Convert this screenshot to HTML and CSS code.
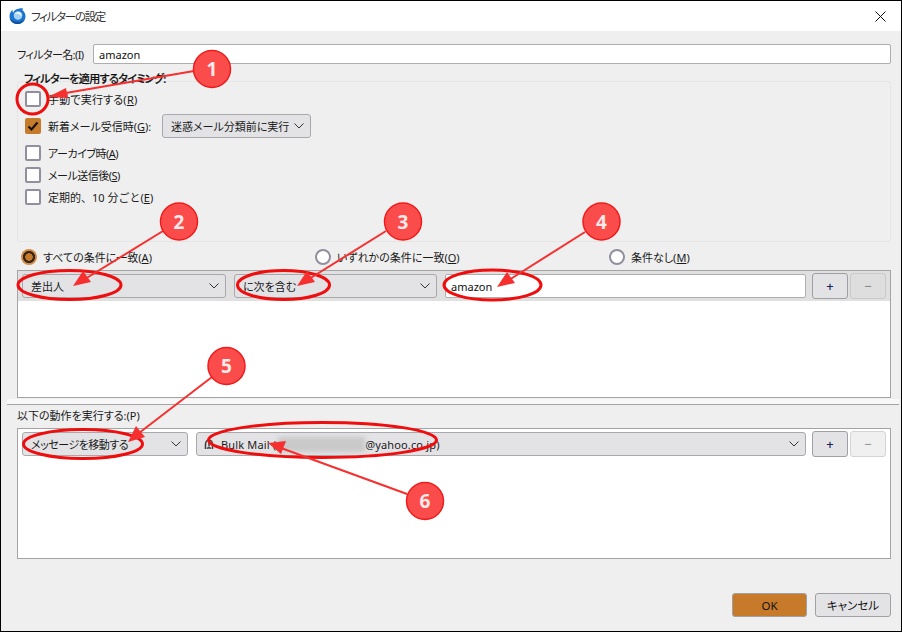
FILE: index.html
```html
<!DOCTYPE html>
<html lang="ja">
<head>
<meta charset="utf-8">
<title>フィルターの設定</title>
<link rel="stylesheet" href="styles.css">
</head>
<body>
<div class="window">
  <header class="titlebar">
    <svg class="logo" viewBox="0 0 17 17" width="17" height="17"><path d="M8.500 1C10 .6 12.500 0 14 .5c-.5.6-.6 1.200-.4 1.800 1.800 1.400 2.900 3.600 2.900 6 0 4.300-3.600 7.700-8 7.700s-8-3.400-8-7.700C.5 5 2 3 4 1.800 3.500 3 3.600 4 4 5c1-2.300 2.500-3.500 4.500-4z" fill="#1b74cf"/><path d="M.8 10.500c1 3.500 4 5.500 7.700 5.500 3.500 0 6.500-2.200 7.600-5.300-1.800 2.300-4.500 3.500-7.400 3.300C5.800 13.800 3 12.800.8 10.500z" fill="#0d4f9e"/><circle cx="9" cy="7.500" r="4.300" fill="#a8d2f2"/><path d="M5.600 6.500c.8-2.400 4-3.500 6-1.800 1 1 1.300 2.300.8 3.500-1-2-4-3.200-6.800-1.700z" fill="#eef7fe"/></svg>
    <span class="title">フィルターの設定</span>
    <svg class="close" viewBox="0 0 11 11" width="11" height="11"><path d="M.5.500l10 10M10.500.500l-10 10" stroke="#111" stroke-width="1" fill="none"/></svg>
  </header>

  <main class="content">
    <div class="name-row">
      <label class="name-label">フィルター名:(I)</label>
      <div class="text-input name-input">amazon</div>
    </div>

    <section class="timing">
      <div class="legend">フィルターを適用するタイミング:</div>
      <div class="check-row first"><span class="check"></span><span class="manual">手動で実行する(<u>R</u>)</span></div>
      <div class="check-row second">
        <span class="check checked"><svg viewBox="0 0 16 16" width="16" height="16"><path d="M3.500 8.500l3 3 6-7" stroke="#111" stroke-width="2.200" fill="none"/></svg></span>
        <span class="incoming">新着メール受信時(<u>G</u>):</span>
        <span class="select timing-select">迷惑メール分類前に実行<svg class="chev" viewBox="0 0 10 6" width="10" height="6"><path d="M.5.500l4.500 4.500 4.500-4.500" stroke="#333" fill="none"/></svg></span>
      </div>
      <div class="check-row third"><span class="check"></span><span class="tight">アーカイブ時(<u>A</u>)</span></div>
      <div class="check-row fourth"><span class="check"></span><span class="tight">メール送信後(<u>S</u>)</span></div>
      <div class="check-row fourth"><span class="check"></span><span class="periodic">定期的、10 分ごと(<u>E</u>)</span></div>
    </section>

    <div class="radios">
      <div class="radio-item"><span class="radio on"></span><span>すべての条件に一致(<u>A</u>)</span></div>
      <div class="radio-item"><span class="radio"></span><span>いずれかの条件に一致(<u>O</u>)</span></div>
      <div class="radio-item"><span class="radio"></span><span>条件なし(<u>M</u>)</span></div>
    </div>

    <section class="list rules">
      <div class="list-row rule-row">
        <span class="select sel-a">差出人<svg class="chev" viewBox="0 0 10 6" width="10" height="6"><path d="M.5.500l4.500 4.500 4.500-4.500" stroke="#333" fill="none"/></svg></span>
        <span class="select sel-b">に次を含む<svg class="chev" viewBox="0 0 10 6" width="10" height="6"><path d="M.5.500l4.500 4.500 4.500-4.500" stroke="#333" fill="none"/></svg></span>
        <div class="text-input value-input">amazon</div>
        <span class="btn-pair"><button class="icon-btn">+</button><button class="icon-btn dim">−</button></span>
      </div>
    </section>
  </main>

  <div class="splitter"></div>

  <section class="content lower">
    <div class="action-label">以下の動作を実行する:(P)</div>
    <section class="list actions">
      <div class="list-row action-row">
        <span class="select sel-c"><span class="tight">メッセージを移動する</span><svg class="chev" viewBox="0 0 10 6" width="10" height="6"><path d="M.5.500l4.500 4.500 4.500-4.500" stroke="#333" fill="none"/></svg></span>
        <span class="select sel-d">
          <span class="folder">
            <svg viewBox="0 0 10 11" width="10" height="11"><path d="M1.500 10V5.500C1.500 3 3 1 5 1s3.500 2 3.500 4.500V10M3 9.500c1-.8 3-.8 4 0M5 3.500v4" stroke="#3c3c3c" stroke-width="1.500" fill="none"/></svg>
            <span class="mail-name">Bulk Mail (</span><span class="redacted"></span><span class="mail-name">@yahoo.co.jp)</span>
          </span>
          <svg class="chev" viewBox="0 0 10 6" width="10" height="6"><path d="M.5.500l4.500 4.500 4.500-4.500" stroke="#333" fill="none"/></svg>
        </span>
        <span class="btn-pair"><button class="icon-btn">+</button><button class="icon-btn faded">−</button></span>
      </div>
    </section>
    <footer class="dialog-buttons">
      <button class="dlg-btn primary">OK</button>
      <button class="dlg-btn">キャンセル</button>
    </footer>
  </section>

  <svg class="notes" viewBox="0 0 902 632" width="902" height="632">
    <g fill="none" stroke="#f00d0d" stroke-width="3">
      <ellipse cx="32.500" cy="99" rx="15.500" ry="15"/>
      <ellipse cx="69.500" cy="285" rx="51.500" ry="14.500"/>
      <ellipse cx="283.500" cy="285" rx="46" ry="14.500"/>
      <ellipse cx="492.500" cy="285" rx="48.500" ry="15"/>
      <ellipse cx="83" cy="444" rx="59.500" ry="14.500"/>
      <ellipse cx="322.500" cy="440" rx="114" ry="17.500"/>
    </g>
    <g stroke="#f5302f" stroke-width="2" fill="#f5302f">
      <line x1="194" y1="71" x2="60" y2="94"/><polygon stroke="none" points="48,97 66,88 68,98"/>
      <line x1="163" y1="231" x2="85" y2="279"/><polygon stroke="none" points="73,286 83,271 91,282"/>
      <line x1="386" y1="231" x2="309" y2="279"/><polygon stroke="none" points="297,286 307,271 315,282"/>
      <line x1="585" y1="232" x2="509" y2="280"/><polygon stroke="none" points="497,287 507,272 515,283"/>
      <line x1="212" y1="377" x2="139" y2="433"/><polygon stroke="none" points="128,442 136,426 145,437"/>
      <line x1="407" y1="494" x2="281" y2="448"/><polygon stroke="none" points="268,443 286,441 281,454"/>
    </g>
    <g fill="#fb4c4c" stroke="#ee1c1c" stroke-width="1.500">
      <circle cx="212" cy="69" r="18.500"/>
      <circle cx="179" cy="221.500" r="18.500"/>
      <circle cx="403" cy="221.500" r="18.500"/>
      <circle cx="601.500" cy="221.500" r="18.500"/>
      <circle cx="226.500" cy="366" r="18.500"/>
      <circle cx="425" cy="501" r="18.500"/>
    </g>
    <g class="num">
      <text x="212" y="76">1</text>
      <text x="179" y="229">2</text>
      <text x="403" y="229">3</text>
      <text x="601.500" y="229">4</text>
      <text x="226.500" y="373">5</text>
      <text x="425" y="508">6</text>
    </g>
  </svg>
</div>
</body>
</html>
```
FILE: styles.css
```css
* { box-sizing: border-box; }
html, body { margin: 0; padding: 0; }
body { width: 902px; height: 632px; overflow: hidden; font-family: "Noto Sans", "Noto Sans CJK JP", sans-serif; font-size: 11px; font-feature-settings: "palt"; color: #1a1a1a; }
u { text-underline-offset: 1px; }

.window { position: relative; width: 902px; height: 632px; border: 1px solid #000; background: #efefef; display: flex; flex-direction: column; }

.titlebar { height: 30px; flex: none; background: #fff; display: flex; align-items: center; padding: 0 15px 0 8px; }
.logo { flex: none; }
.title { margin-left: 5px; font-size: 11.500px; letter-spacing: -1.300px; color: #333; }
.close { margin-left: auto; }

.content { padding: 0 10px 0 16px; }

.name-row { display: flex; align-items: center; gap: 5px; margin-top: 13px; }
.name-label { width: 71px; white-space: nowrap; letter-spacing: -.6px; }
.text-input { background: #fff; border: 1px solid #aeaeae; border-radius: 2px; display: flex; align-items: center; padding-left: 5px; color: #111; }
.name-input { width: 798px; height: 20px; }

.timing { position: relative; height: 161px; margin-top: 17px; border: 1px solid #e5e5e5; border-radius: 3px; padding: 9px 0 0 7px; }
.legend { position: absolute; left: 6px; top: -12px; font-weight: 500; line-height: 18px; letter-spacing: -.6px; color: #111; -webkit-text-stroke: .2px #111; }
.check-row { display: flex; align-items: center; gap: 7px; height: 16px; white-space: nowrap; }
.second { height: 24px; margin-top: 7px; }
.third { margin-top: 7px; }
.fourth { margin-top: 6px; }
.manual { letter-spacing: .2px; }
.tight { letter-spacing: -.5px; }
.periodic { font-feature-settings: normal; }
.incoming { width: 107px; }
.check { flex: none; width: 16px; height: 16px; background: #fff; border: 2px solid #918f9f; border-radius: 2px; }
.check.checked { background: #c87a2b; border-color: #c87a2b; position: relative; }
.check.checked svg { position: absolute; left: -2px; top: -2px; }

.select { display: flex; align-items: center; justify-content: space-between; height: 24px; background: #e3e3e6; border: 1px solid #a9a9ad; border-radius: 3px; padding: 0 6px 0 8px; white-space: nowrap; color: #1a1a1a; flex: none; }
.chev { flex: none; }
.timing-select { width: 149px; }

.radios { display: flex; margin-top: 6px; padding-left: 4px; height: 18px; }
.radio-item { display: flex; flex: none; align-items: center; gap: 6px; width: 294px; white-space: nowrap; }
.radio { width: 16px; height: 16px; flex: none; border-radius: 50%; background: #fff; border: 2px solid #918f9f; }
.radio.on { border: 0; background: radial-gradient(circle, #c87a2b 0 3.500px, #33261a 4px 5.800px, #d18a42 6.300px); }

.list { background: #fff; border: 1px solid #a4a4a4; }
.rules { margin-top: 4px; height: 128px; }
.list-row { display: flex; align-items: center; padding-left: 4px; }
.rule-row { height: 30px; background: #e0e0e0; }
.action-row { height: 30px; }
.sel-a { width: 204px; }
.sel-b { width: 203px; margin-left: 8px; }
.value-input { width: 361px; height: 24px; margin-left: 8px; }
.btn-pair { display: flex; flex: none; gap: 2px; margin-left: 6px; }
.icon-btn { width: 36px; height: 26px; padding: 0; background: #e3e3e6; border: 1px solid #a0a0a4; border-radius: 3px; font: 500 13px "Noto Sans", sans-serif; color: #14245c; }
.icon-btn.dim { background: #dedede; border-color: #c9c9c9; color: #8b8b8b; }
.icon-btn.faded { background: #f0f0f0; border-color: #d4d4d4; color: #9a9a9a; }

.splitter { height: 6px; margin: 1px 2px 0 6px; flex: none; background: #f8f8f8; border-bottom: 1px solid #a5a5a5; }

.action-label { line-height: 18px; margin-top: 2px; }
.actions { margin-top: 3px; height: 131px; }
.sel-c { width: 166px; }
.sel-d { width: 610px; margin-left: 8px; padding-left: 7px; }
.folder { display: flex; align-items: center; white-space: pre; }
.folder svg { margin-right: 7px; }
.mail-name { letter-spacing: .15px; }
.redacted { display: inline-block; width: 87px; height: 15px; margin-left: 2px; background: #c9c9c9; filter: blur(2px); }

.dialog-buttons { display: flex; justify-content: flex-end; gap: 8px; margin-top: 34px; }
.dlg-btn { width: 76px; height: 24px; padding: 0; background: #e3e3e6; border: 1px solid #a0a0a4; border-radius: 3px; font: 11.500px "Noto Sans", "Noto Sans CJK JP", sans-serif; font-feature-settings: "palt"; color: #111; }
.dlg-btn.primary { width: 75px; background: #c87a2b; }

.notes { position: absolute; left: -1px; top: -1px; pointer-events: none; }
.num text { font: 700 19px "Noto Sans", sans-serif; fill: #ffe9e9; text-anchor: middle; }
```
